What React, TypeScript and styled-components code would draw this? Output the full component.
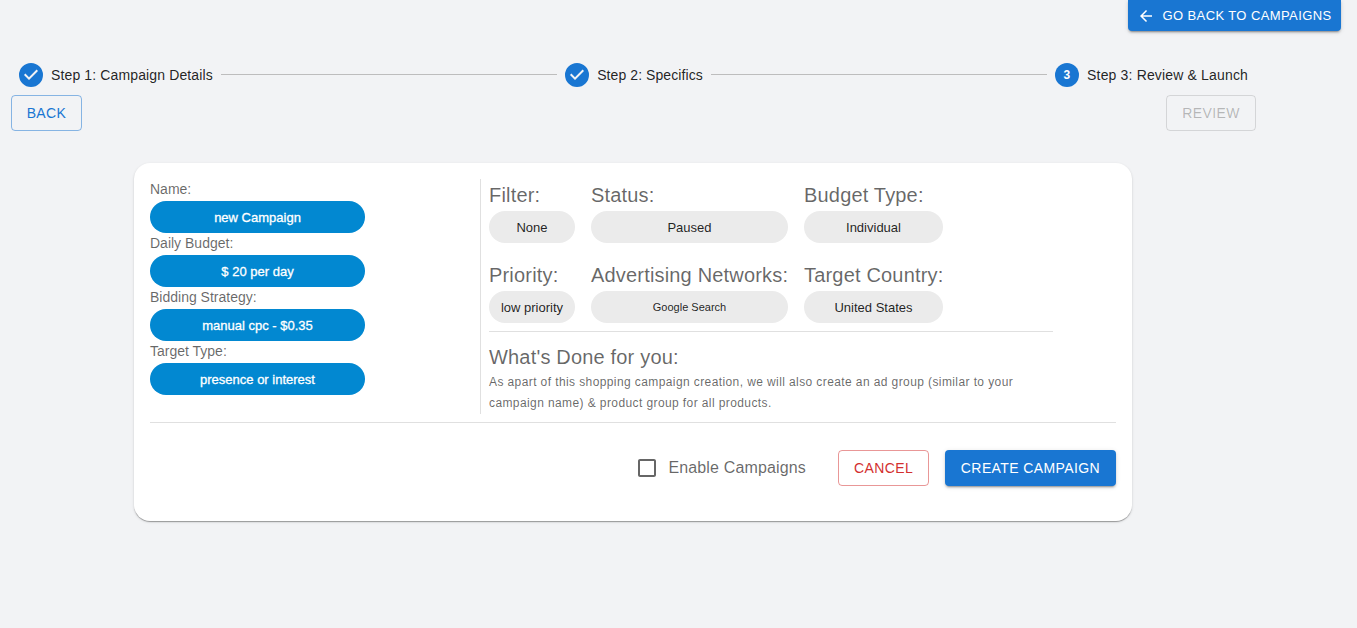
import React from "react";
import styled, { createGlobalStyle } from "styled-components";

const Global = createGlobalStyle`
  html, body { margin: 0; padding: 0; background: #f2f3f5; }
  body { font-family: "Liberation Sans", Arial, sans-serif; color: rgba(0,0,0,0.87); }
  * { box-sizing: border-box; }
`;

const Page = styled.div`
  width: 1357px;
  height: 628px;
  overflow: hidden;
  background: #f2f3f5;
`;
const TopBar = styled.div`
  display: flex;
  justify-content: flex-end;
  padding-right: 16px;
`;
const BaseButton = styled.button`
  font-family: inherit;
  font-size: 14px;
  font-weight: 400;
  letter-spacing: 0.4px;
  line-height: 1;
  text-transform: uppercase;
  border-radius: 4px;
  display: inline-flex;
  align-items: center;
  justify-content: center;
  cursor: pointer;
  background: transparent;
`;
const BackToCampaigns = styled(BaseButton)`
  width: 213px;
  height: 31px;
  gap: 7px;
  padding: 0;
  border: 0;
  font-size: 13px;
  color: #fff;
  background: #1976d2;
  border-radius: 0 0 4px 4px;
  box-shadow: 0 3px 1px -2px rgba(0,0,0,.2), 0 2px 2px 0 rgba(0,0,0,.14), 0 1px 5px 0 rgba(0,0,0,.12);
`;
const Stepper = styled.div`
  display: flex;
  align-items: center;
  width: 1229px;
  height: 24px;
  margin: 32px 0 0 19px;
`;
const Step = styled.div<{ $track: number }>`
  display: flex;
  align-items: center;
  gap: 8px;
  font-size: 14px;
  white-space: nowrap;
  letter-spacing: ${(p) => p.$track}px;
`;
const Connector = styled.div`
  flex: 1;
  height: 1px;
  margin: 0 8px 1px;
  background: #bdbdbd;
`;
const StepIcon = styled.svg`
  width: 24px;
  height: 24px;
  display: block;
  fill: #1976d2;
`;
const StepNumber = styled.text`
  fill: #fff;
  font-size: 12px;
  font-weight: 700;
  font-family: "Liberation Sans", Arial, sans-serif;
`;
const NavRow = styled.div`
  display: flex;
  justify-content: space-between;
  padding: 0 101px 0 11px;
  margin-top: 8px;
`;
const OutlineButton = styled(BaseButton)<{ $tone: string; $border: string; $w: number }>`
  width: ${(p) => p.$w}px;
  height: 36px;
  color: ${(p) => p.$tone};
  border: 1px solid ${(p) => p.$border};
`;
const Card = styled.div`
  width: 998px;
  height: 358px;
  margin: 32px 0 0 134px;
  padding: 16px;
  background: #fff;
  border-radius: 16px;
  box-shadow: 0 2px 1px -1px rgba(0,0,0,.2), 0 1px 1px 0 rgba(0,0,0,.14), 0 1px 3px 0 rgba(0,0,0,.12);
`;
const Summary = styled.div`
  display: flex;
  height: 235px;
`;
const LeftColumn = styled.div`
  width: 331px;
  height: 235px;
  border-right: 1px solid #e0e0e0;
  display: flex;
  flex-direction: column;
  align-items: flex-start;
`;
const SmallLabel = styled.div`
  font-size: 14px;
  line-height: 20px;
  padding-bottom: 2px;
  color: rgba(0,0,0,0.6);
`;
const BluePill = styled.div`
  width: 215px;
  height: 32px;
  border-radius: 16px;
  background: #0288d1;
  color: #fff;
  font-size: 13px;
  font-weight: 400;
  -webkit-text-stroke: 0.3px #fff;
  display: flex;
  align-items: center;
  justify-content: center;
`;
const RightColumn = styled.div`
  padding-left: 8px;
  width: 573px;
`;
const Grid = styled.div`
  display: grid;
  grid-template-columns: 86px 197px 139px;
  column-gap: 16px;
`;
const BigLabel = styled.div<{ $top?: boolean }>`
  font-size: 20px;
  line-height: 32px;
  letter-spacing: 0.18px;
  white-space: nowrap;
  color: rgba(0,0,0,0.6);
  margin-top: ${(p) => (p.$top ? 0 : 16)}px;
`;
const GreyPill = styled.div<{ $small?: boolean }>`
  height: 32px;
  border-radius: 16px;
  background: #ebebeb;
  color: rgba(0,0,0,0.87);
  font-size: ${(p) => (p.$small ? 11 : 13)}px;
  display: flex;
  align-items: center;
  justify-content: center;
  white-space: nowrap;
`;
const InnerDivider = styled.div`
  width: 564px;
  height: 1px;
  background: #e0e0e0;
  margin-top: 8px;
`;
const DoneTitle = styled.div`
  font-size: 20px;
  line-height: 32px;
  letter-spacing: 0.18px;
  margin-top: 9px;
  color: rgba(0,0,0,0.6);
`;
const DoneText = styled.div`
  width: 564px;
  margin-top: -1px;
  font-size: 12px;
  line-height: 21px;
  letter-spacing: 0.4px;
  color: rgba(0,0,0,0.6);
`;
const Divider = styled.div`
  height: 1px;
  background: #e0e0e0;
  margin-top: 8px;
`;
const Footer = styled.div`
  display: flex;
  justify-content: flex-end;
  align-items: center;
  margin-top: 27px;
`;
const CheckLabel = styled.label`
  display: flex;
  align-items: center;
  gap: 9px;
  font-size: 16px;
  letter-spacing: 0.15px;
  color: rgba(0,0,0,0.6);
  margin-right: 32px;
`;
const CheckIcon = styled.svg`
  width: 24px;
  height: 24px;
  display: block;
  fill: rgba(0,0,0,0.6);
`;
const CreateButton = styled(BaseButton)`
  width: 171px;
  height: 36px;
  margin-left: 16px;
  border: 0;
  color: #fff;
  background: #1976d2;
  box-shadow: 0 3px 1px -2px rgba(0,0,0,.2), 0 2px 2px 0 rgba(0,0,0,.14), 0 1px 5px 0 rgba(0,0,0,.12);
`;
const ArrowIcon = styled.svg`
  width: 18px;
  height: 18px;
  fill: #fff;
  display: block;
`;

const CHECK = "M12 0a12 12 0 1 0 0 24 12 12 0 0 0 0-24zm-2 17l-5-5 1.4-1.4 3.6 3.6 7.6-7.6L19 8l-9 9z";

const left = [
  ["Name:", "new Campaign"],
  ["Daily Budget:", "$ 20 per day"],
  ["Bidding Strategy:", "manual cpc - $0.35"],
  ["Target Type:", "presence or interest"],
];

export default function App() {
  return (
    <Page>
      <Global />
      <TopBar>
        <BackToCampaigns>
          <ArrowIcon viewBox="0 0 24 24">
            <path d="M20 11H7.83l5.59-5.59L12 4l-8 8 8 8 1.41-1.41L7.83 13H20v-2z" />
          </ArrowIcon>
          Go back to campaigns
        </BackToCampaigns>
      </TopBar>
      <Stepper>
        <Step $track={0.13}>
          <StepIcon viewBox="0 0 24 24"><path d={CHECK} /></StepIcon>
          Step 1: Campaign Details
        </Step>
        <Connector />
        <Step $track={0.08}>
          <StepIcon viewBox="0 0 24 24"><path d={CHECK} /></StepIcon>
          Step 2: Specifics
        </Step>
        <Connector />
        <Step $track={0.16}>
          <StepIcon viewBox="0 0 24 24">
            <circle cx="12" cy="12" r="12" />
            <StepNumber x="12" y="16" textAnchor="middle">3</StepNumber>
          </StepIcon>
          Step 3: Review &amp; Launch
        </Step>
      </Stepper>
      <NavRow>
        <OutlineButton $w={71} $tone="#1976d2" $border="rgba(25,118,210,0.5)">Back</OutlineButton>
        <OutlineButton $w={90} $tone="rgba(0,0,0,0.26)" $border="rgba(0,0,0,0.12)">Review</OutlineButton>
      </NavRow>
      <Card>
        <Summary>
          <LeftColumn>
            {left.map(([label, value]) => (
              <React.Fragment key={label}>
                <SmallLabel>{label}</SmallLabel>
                <BluePill>{value}</BluePill>
              </React.Fragment>
            ))}
          </LeftColumn>
          <RightColumn>
            <Grid>
              <BigLabel $top>Filter:</BigLabel>
              <BigLabel $top>Status:</BigLabel>
              <BigLabel $top>Budget Type:</BigLabel>
              <GreyPill>None</GreyPill>
              <GreyPill>Paused</GreyPill>
              <GreyPill>Individual</GreyPill>
              <BigLabel>Priority:</BigLabel>
              <BigLabel>Advertising Networks:</BigLabel>
              <BigLabel>Target Country:</BigLabel>
              <GreyPill>low priority</GreyPill>
              <GreyPill $small>Google Search</GreyPill>
              <GreyPill>United States</GreyPill>
            </Grid>
            <InnerDivider />
            <DoneTitle>What's Done for you:</DoneTitle>
            <DoneText>
              As apart of this shopping campaign creation, we will also create an ad group (similar to your campaign name) &amp; product group for all products.
            </DoneText>
          </RightColumn>
        </Summary>
        <Divider />
        <Footer>
          <CheckLabel>
            <CheckIcon viewBox="0 0 24 24">
              <path d="M19 5v14H5V5h14m0-2H5c-1.1 0-2 .9-2 2v14c0 1.1.9 2 2 2h14c1.1 0 2-.9 2-2V5c0-1.1-.9-2-2-2z" />
            </CheckIcon>
            Enable Campaigns
          </CheckLabel>
          <OutlineButton $w={91} $tone="#d32f2f" $border="rgba(211,47,47,0.5)">Cancel</OutlineButton>
          <CreateButton>Create campaign</CreateButton>
        </Footer>
      </Card>
    </Page>
  );
}
